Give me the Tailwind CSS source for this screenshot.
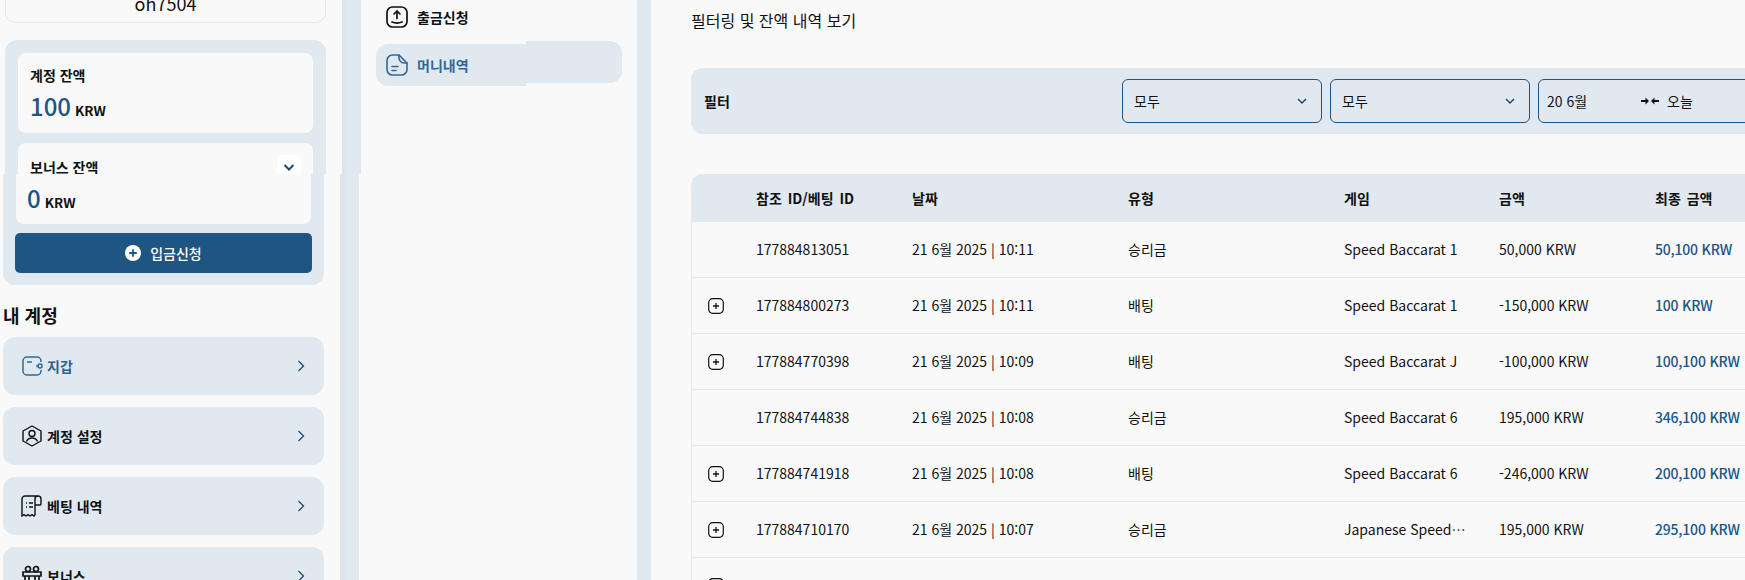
<!DOCTYPE html>
<html lang="ko">
<head>
<meta charset="utf-8">
<script src="https://cdn.jsdelivr.net/npm/@tailwindcss/browser@4"></script>
</head>
<body class="m-0 bg-[#f9f9f9]">
<div class="flex w-[1745px] h-[580px] overflow-hidden bg-[#f9f9f9] text-[14px] text-[#111111] font-['Noto_Sans_CJK_KR','Noto_Sans',sans-serif]">

  <!-- account sidebar -->
  <aside class="w-[340px] shrink-0 flex flex-col">
    <div class="h-[174px] shrink-0 overflow-hidden pl-[5px] pr-[14px]">
      <div class="h-[24px] -mt-[1px] rounded-b-[10px] border border-t-0 border-[#e2e6ea] flex items-end justify-center text-[18px] leading-[24px] overflow-hidden"><span class="relative top-[-7px]">oh7504</span></div>
      <div class="mt-[17px] h-[300px] rounded-t-[12px] bg-[#e1e9f0] px-[13px] pt-[13px]">
        <div class="h-[80px] rounded-[8px] bg-[#f9f9f9] px-[12px] pt-[12px]">
          <div class="text-[14px] leading-[20px] font-bold">계정 잔액</div>
          <div class="flex items-baseline gap-[4px] mt-[4px]"><span class="text-[24px] leading-[34px] font-medium text-[#1f5582]">100</span><span class="text-[13.500px] font-semibold">KRW</span></div>
        </div>
        <div class="mt-[10px] h-[80px] rounded-[8px] bg-[#f9f9f9] pl-[12px] pr-[12px] pt-[12px] flex justify-between">
          <div class="text-[14px] leading-[20px] font-bold pt-[2px]">보너스 잔액</div>
          <div class="w-[24px] h-[24px] rounded-[5px] bg-white flex items-center justify-center">
            <svg width="14" height="14" viewBox="0 0 14 14" fill="none" stroke="#1f4a70" stroke-width="2"><path d="M2.500 5l4.500 4.500L11.500 5"/></svg>
          </div>
        </div>
      </div>
    </div>
    <div class="flex-1 min-h-0 pl-[3px] pr-[16px]">
      <div class="h-[111px] rounded-b-[12px] bg-[#e1e9f0] px-[12px]">
        <div class="h-[50px] rounded-b-[8px] bg-[#f9f9f9] mx-[1px] pl-[11px] pr-[12px] pt-[9px] flex items-baseline gap-[4px]"><span class="text-[24px] leading-[34px] font-medium text-[#1f5582] -mt-[2px]">0</span><span class="text-[13.500px] font-semibold">KRW</span></div>
        <div class="mt-[9px] h-[40px] rounded-[5px] bg-[#1f5582] text-white flex items-center justify-center gap-[9px] text-[14px] font-medium">
          <svg width="16" height="16" viewBox="0 0 16 16"><circle cx="8" cy="8" r="8" fill="#fff"/><path d="M8 4.200v7.600M4.200 8h7.600" stroke="#1f5582" stroke-width="1.800"/></svg>
          <span>입금신청</span>
        </div>
      </div>
      <div class="mt-[16px] h-[28px] text-[18px] leading-[28px] font-bold">내 계정</div>
      <div class="mt-[8px] flex flex-col gap-[12px]">
        <div class="h-[58px] shrink-0 rounded-[12px] bg-[#e1e9f0] pl-[18px] pr-[17px] flex items-center text-[14px] font-bold text-[#2a6290]">
          <svg class="mr-[4px]" width="22" height="22" viewBox="0 0 22 22" fill="none" stroke="#2f6896" stroke-width="1.500"><path d="M20 7V6a4 4 0 0 0-4-4H6a4 4 0 0 0-4 4v10a4 4 0 0 0 4 4h10a4 4 0 0 0 4-4v-1"/><path d="M6 7h5"/><circle cx="19" cy="11" r="2"/><path d="M17 11h-2"/></svg>
          <span class="flex-1">지갑</span>
          <svg width="12" height="14" viewBox="0 0 12 14" fill="none" stroke="#1f4a70" stroke-width="1.300"><path d="M3.500 2l5 5-5 5"/></svg>
        </div>
        <div class="h-[58px] shrink-0 rounded-[12px] bg-[#e1e9f0] pl-[18px] pr-[17px] flex items-center text-[14px] font-bold">
          <svg class="mr-[4px]" width="22" height="22" viewBox="0 0 22 22" fill="none" stroke="#111" stroke-width="1.400"><path d="M11 1l9 5v10l-9 5-9-5V6z" stroke-linejoin="round"/><circle cx="11" cy="8.500" r="3"/><path d="M5.500 16.500c1-2.500 3-3.500 5.500-3.500s4.500 1 5.500 3.500"/></svg>
          <span class="flex-1">계정 설정</span>
          <svg width="12" height="14" viewBox="0 0 12 14" fill="none" stroke="#1f4a70" stroke-width="1.300"><path d="M3.500 2l5 5-5 5"/></svg>
        </div>
        <div class="h-[58px] shrink-0 rounded-[12px] bg-[#e1e9f0] pl-[18px] pr-[17px] flex items-center text-[14px] font-bold">
          <svg class="mr-[4px]" width="22" height="22" viewBox="0 0 22 22" fill="none" stroke="#111" stroke-width="1.400"><path d="M17 1H4a3 3 0 0 0-3 3v17l2-1.300 2 1.300 2-1.300 2 1.300 2-1.300 2 1.300 1-1.300V4a3 3 0 0 1 6 0v5a1 1 0 0 1-1 1h-5"/><path d="M5 8h1M8 8h4M5 12h1M8 12h4"/></svg>
          <span class="flex-1">베팅 내역</span>
          <svg width="12" height="14" viewBox="0 0 12 14" fill="none" stroke="#1f4a70" stroke-width="1.300"><path d="M3.500 2l5 5-5 5"/></svg>
        </div>
        <div class="h-[58px] shrink-0 rounded-[12px] bg-[#e1e9f0] pl-[18px] pr-[17px] flex items-center text-[14px] font-bold">
          <svg class="mr-[4px]" width="22" height="22" viewBox="0 0 22 22" fill="none" stroke="#111" stroke-width="1.700"><path d="M2 7h18v4H2zM4 11v10h14V11M8 11v10M14 11v10"/><circle cx="7" cy="4" r="2.500"/><circle cx="15" cy="4" r="2.500"/></svg>
          <span class="flex-1">보너스</span>
          <svg width="12" height="14" viewBox="0 0 12 14" fill="none" stroke="#1f4a70" stroke-width="1.300"><path d="M3.500 2l5 5-5 5"/></svg>
        </div>
      </div>
    </div>
  </aside>

  <!-- gutter -->
  <div class="w-[21px] shrink-0 flex flex-col">
    <div class="h-[174px] flex pl-[2px]"><div class="w-[5px] bg-[#dfe4ea]"></div><div class="flex-1 bg-[#e1e9f0]"></div></div>
    <div class="flex-1 flex"><div class="w-[6px] bg-[#dfe4ea]"></div><div class="w-[13px] bg-[#e1e9f0]"></div></div>
  </div>

  <!-- wallet nav -->
  <nav class="w-[276px] shrink-0 pl-[15px] pr-[15px] flex flex-col">
    <div class="h-[41px] shrink-0 flex items-start pl-[10px] pt-[6px] gap-[9px] font-bold text-[14px]">
      <svg width="22" height="22" viewBox="0 0 22 22" fill="none" stroke="#111" stroke-width="1.700" stroke-linecap="round"><rect x="1" y="1" width="20" height="20" rx="5.500"/><path d="M11 12.500V5.500M8 8l3-3 3 3"/><path d="M6 16c3 1.300 7 1.300 10 0"/></svg>
      <span class="leading-[22px]">출금신청</span>
    </div>
    <div class="flex items-start">
      <div class="mt-[3px] w-[150px] h-[42px] rounded-l-[12px] bg-[#e1e9f0] flex items-center pl-[10px] gap-[9px] font-bold text-[14px] text-[#2f6896]">
        <svg width="22" height="22" viewBox="0 0 22 22" fill="none" stroke="#2f6896" stroke-width="1.600" stroke-linecap="round" stroke-linejoin="round"><path d="M13 1H6.500A5.500 5.500 0 0 0 1 6.500v9A5.500 5.500 0 0 0 6.500 21h9a5.500 5.500 0 0 0 5.500-5.500V9z"/><path d="M13 1v3a5 5 0 0 0 5 5h3"/><path d="M6 12.500h6M6 16.500h4"/></svg>
        <span>머니내역</span>
      </div>
      <div class="w-[96px] h-[42px] rounded-r-[12px] bg-[#e1e9f0]"></div>
    </div>
  </nav>

  <div class="w-[14px] shrink-0 bg-[#e1e9f0]"></div>

  <!-- main -->
  <main class="flex-1 min-w-0 pl-[40px] overflow-hidden">
    <div class="h-[42px] leading-[40px] text-[16px]">필터링 및 잔액 내역 보기</div>
    <div class="mt-[26px] w-[1200px] h-[66px] rounded-[12px] border border-[#dfe6ec] bg-[#e1e9f0] flex items-center pl-[12px]">
      <span class="font-bold w-[418px] shrink-0 text-[14px]">필터</span>
      <div class="flex gap-[8px] shrink-0">
        <div class="w-[200px] h-[44px] rounded-[6px] border border-[#1f5582] px-[11px] flex items-center justify-between"><span>모두</span>
          <svg class="mr-[2px]" width="12" height="12" viewBox="0 0 12 12" fill="none" stroke="#1f4a70" stroke-width="1.500"><path d="M2 4l4 4 4-4"/></svg></div>
        <div class="w-[200px] h-[44px] rounded-[6px] border border-[#1f5582] px-[11px] flex items-center justify-between"><span>모두</span>
          <svg class="mr-[2px]" width="12" height="12" viewBox="0 0 12 12" fill="none" stroke="#1f4a70" stroke-width="1.500"><path d="M2 4l4 4 4-4"/></svg></div>
        <div class="w-[260px] h-[44px] rounded-[6px] border border-[#1f5582] pl-[8px] flex items-center">
          <span class="w-[94px] shrink-0">20 6월</span>
          <svg class="mr-[8px] shrink-0" width="18" height="10" viewBox="0 0 18 10" fill="#111"><path d="M0 4h4.500V1.500L8 5 4.500 8.500V6H0zM18 4h-4.500V1.500L10 5l3.500 3.500V6H18z"/></svg>
          <span>오늘</span>
        </div>
      </div>
    </div>
    <div class="mt-[40px] w-[1100px]">
      <div class="h-[48px] rounded-t-[12px] bg-[#e1e9f0] border-t border-[#dfe6ec] grid grid-cols-[65px_156px_216px_216px_155px_156px_1fr] items-center font-bold text-[14px] [word-spacing:2px]">
        <span></span><span>참조 ID/베팅 ID</span><span>날짜</span><span>유형</span><span>게임</span><span>금액</span><span>최종 금액</span>
      </div>
      <div class="border-l border-[#e4e7eb]">
        <div class="h-[56px] border-b border-[#e4e7eb] -ml-[1px] grid grid-cols-[65px_156px_216px_216px_155px_156px_1fr] items-center">
          <span></span><span>177884813051</span><span>21 6월 2025 | 10:11</span><span>승리금</span><span>Speed Baccarat 1</span><span>50,000 KRW</span><span class="font-medium tracking-[-0.2px] text-[#1f5582]">50,100 KRW</span>
        </div>
        <div class="h-[56px] border-b border-[#e4e7eb] -ml-[1px] grid grid-cols-[65px_156px_216px_216px_155px_156px_1fr] items-center">
          <span class="pl-[17px]"><svg class="block" width="16" height="16" viewBox="0 0 16 16" fill="none" stroke="#111"><rect x="0.700" y="0.700" width="14.600" height="14.600" rx="4" stroke-width="1.200"/><path d="M8 5v6M5 8h6" stroke-width="1.300"/></svg></span><span>177884800273</span><span>21 6월 2025 | 10:11</span><span>배팅</span><span>Speed Baccarat 1</span><span>-150,000 KRW</span><span class="font-medium tracking-[-0.2px] text-[#1f5582]">100 KRW</span>
        </div>
        <div class="h-[56px] border-b border-[#e4e7eb] -ml-[1px] grid grid-cols-[65px_156px_216px_216px_155px_156px_1fr] items-center">
          <span class="pl-[17px]"><svg class="block" width="16" height="16" viewBox="0 0 16 16" fill="none" stroke="#111"><rect x="0.700" y="0.700" width="14.600" height="14.600" rx="4" stroke-width="1.200"/><path d="M8 5v6M5 8h6" stroke-width="1.300"/></svg></span><span>177884770398</span><span>21 6월 2025 | 10:09</span><span>배팅</span><span>Speed Baccarat J</span><span>-100,000 KRW</span><span class="font-medium tracking-[-0.2px] text-[#1f5582]">100,100 KRW</span>
        </div>
        <div class="h-[56px] border-b border-[#e4e7eb] -ml-[1px] grid grid-cols-[65px_156px_216px_216px_155px_156px_1fr] items-center">
          <span></span><span>177884744838</span><span>21 6월 2025 | 10:08</span><span>승리금</span><span>Speed Baccarat 6</span><span>195,000 KRW</span><span class="font-medium tracking-[-0.2px] text-[#1f5582]">346,100 KRW</span>
        </div>
        <div class="h-[56px] border-b border-[#e4e7eb] -ml-[1px] grid grid-cols-[65px_156px_216px_216px_155px_156px_1fr] items-center">
          <span class="pl-[17px]"><svg class="block" width="16" height="16" viewBox="0 0 16 16" fill="none" stroke="#111"><rect x="0.700" y="0.700" width="14.600" height="14.600" rx="4" stroke-width="1.200"/><path d="M8 5v6M5 8h6" stroke-width="1.300"/></svg></span><span>177884741918</span><span>21 6월 2025 | 10:08</span><span>배팅</span><span>Speed Baccarat 6</span><span>-246,000 KRW</span><span class="font-medium tracking-[-0.2px] text-[#1f5582]">200,100 KRW</span>
        </div>
        <div class="h-[56px] border-b border-[#e4e7eb] -ml-[1px] grid grid-cols-[65px_156px_216px_216px_155px_156px_1fr] items-center">
          <span class="pl-[17px]"><svg class="block" width="16" height="16" viewBox="0 0 16 16" fill="none" stroke="#111"><rect x="0.700" y="0.700" width="14.600" height="14.600" rx="4" stroke-width="1.200"/><path d="M8 5v6M5 8h6" stroke-width="1.300"/></svg></span><span>177884710170</span><span>21 6월 2025 | 10:07</span><span>승리금</span><span class="truncate pr-[32px]">Japanese Speed Baccarat</span><span>195,000 KRW</span><span class="font-medium tracking-[-0.2px] text-[#1f5582]">295,100 KRW</span>
        </div>
        <div class="h-[56px] -ml-[1px] grid grid-cols-[65px_156px_216px_216px_155px_156px_1fr] items-center">
          <span class="pl-[17px]"><svg class="block" width="16" height="16" viewBox="0 0 16 16" fill="none" stroke="#111"><rect x="0.700" y="0.700" width="14.600" height="14.600" rx="4" stroke-width="1.200"/><path d="M8 5v6M5 8h6" stroke-width="1.300"/></svg></span>
        </div>
      </div>
    </div>
  </main>
</div>
</body>
</html>
